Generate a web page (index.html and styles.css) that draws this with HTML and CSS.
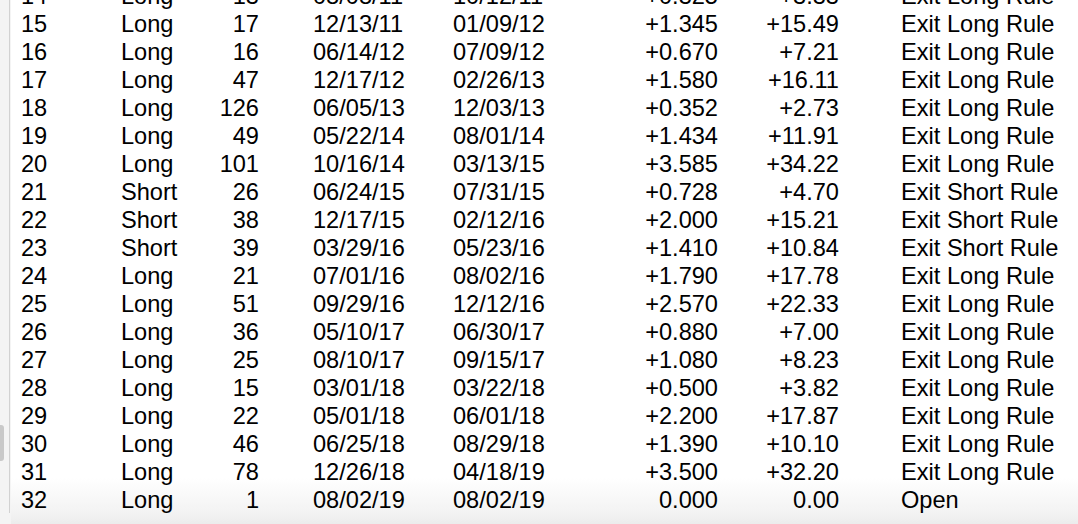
FILE: index.html
```html
<!DOCTYPE html>
<html>
<head>
<meta charset="utf-8">
<link rel="stylesheet" href="styles.css">
</head>
<body>
<div class="page">
  <div class="side">
    <div class="side-line"><div class="tab"></div></div>
  </div>
  <div class="main">
    <div class="rows">
      <div class="row"><span class="c1">14</span><span class="c2">Long</span><span class="c3">13</span><span class="c4">08/08/11</span><span class="c5">10/12/11</span><span class="c6">+0.325</span><span class="c7">+3.33</span><span class="c8">Exit Long Rule</span></div>
      <div class="row"><span class="c1">15</span><span class="c2">Long</span><span class="c3">17</span><span class="c4">12/13/11</span><span class="c5">01/09/12</span><span class="c6">+1.345</span><span class="c7">+15.49</span><span class="c8">Exit Long Rule</span></div>
      <div class="row"><span class="c1">16</span><span class="c2">Long</span><span class="c3">16</span><span class="c4">06/14/12</span><span class="c5">07/09/12</span><span class="c6">+0.670</span><span class="c7">+7.21</span><span class="c8">Exit Long Rule</span></div>
      <div class="row"><span class="c1">17</span><span class="c2">Long</span><span class="c3">47</span><span class="c4">12/17/12</span><span class="c5">02/26/13</span><span class="c6">+1.580</span><span class="c7">+16.11</span><span class="c8">Exit Long Rule</span></div>
      <div class="row"><span class="c1">18</span><span class="c2">Long</span><span class="c3">126</span><span class="c4">06/05/13</span><span class="c5">12/03/13</span><span class="c6">+0.352</span><span class="c7">+2.73</span><span class="c8">Exit Long Rule</span></div>
      <div class="row"><span class="c1">19</span><span class="c2">Long</span><span class="c3">49</span><span class="c4">05/22/14</span><span class="c5">08/01/14</span><span class="c6">+1.434</span><span class="c7">+11.91</span><span class="c8">Exit Long Rule</span></div>
      <div class="row"><span class="c1">20</span><span class="c2">Long</span><span class="c3">101</span><span class="c4">10/16/14</span><span class="c5">03/13/15</span><span class="c6">+3.585</span><span class="c7">+34.22</span><span class="c8">Exit Long Rule</span></div>
      <div class="row"><span class="c1">21</span><span class="c2">Short</span><span class="c3">26</span><span class="c4">06/24/15</span><span class="c5">07/31/15</span><span class="c6">+0.728</span><span class="c7">+4.70</span><span class="c8">Exit Short Rule</span></div>
      <div class="row"><span class="c1">22</span><span class="c2">Short</span><span class="c3">38</span><span class="c4">12/17/15</span><span class="c5">02/12/16</span><span class="c6">+2.000</span><span class="c7">+15.21</span><span class="c8">Exit Short Rule</span></div>
      <div class="row"><span class="c1">23</span><span class="c2">Short</span><span class="c3">39</span><span class="c4">03/29/16</span><span class="c5">05/23/16</span><span class="c6">+1.410</span><span class="c7">+10.84</span><span class="c8">Exit Short Rule</span></div>
      <div class="row"><span class="c1">24</span><span class="c2">Long</span><span class="c3">21</span><span class="c4">07/01/16</span><span class="c5">08/02/16</span><span class="c6">+1.790</span><span class="c7">+17.78</span><span class="c8">Exit Long Rule</span></div>
      <div class="row"><span class="c1">25</span><span class="c2">Long</span><span class="c3">51</span><span class="c4">09/29/16</span><span class="c5">12/12/16</span><span class="c6">+2.570</span><span class="c7">+22.33</span><span class="c8">Exit Long Rule</span></div>
      <div class="row"><span class="c1">26</span><span class="c2">Long</span><span class="c3">36</span><span class="c4">05/10/17</span><span class="c5">06/30/17</span><span class="c6">+0.880</span><span class="c7">+7.00</span><span class="c8">Exit Long Rule</span></div>
      <div class="row"><span class="c1">27</span><span class="c2">Long</span><span class="c3">25</span><span class="c4">08/10/17</span><span class="c5">09/15/17</span><span class="c6">+1.080</span><span class="c7">+8.23</span><span class="c8">Exit Long Rule</span></div>
      <div class="row"><span class="c1">28</span><span class="c2">Long</span><span class="c3">15</span><span class="c4">03/01/18</span><span class="c5">03/22/18</span><span class="c6">+0.500</span><span class="c7">+3.82</span><span class="c8">Exit Long Rule</span></div>
      <div class="row"><span class="c1">29</span><span class="c2">Long</span><span class="c3">22</span><span class="c4">05/01/18</span><span class="c5">06/01/18</span><span class="c6">+2.200</span><span class="c7">+17.87</span><span class="c8">Exit Long Rule</span></div>
      <div class="row"><span class="c1">30</span><span class="c2">Long</span><span class="c3">46</span><span class="c4">06/25/18</span><span class="c5">08/29/18</span><span class="c6">+1.390</span><span class="c7">+10.10</span><span class="c8">Exit Long Rule</span></div>
      <div class="row"><span class="c1">31</span><span class="c2">Long</span><span class="c3">78</span><span class="c4">12/26/18</span><span class="c5">04/18/19</span><span class="c6">+3.500</span><span class="c7">+32.20</span><span class="c8">Exit Long Rule</span></div>
      <div class="row"><span class="c1">32</span><span class="c2">Long</span><span class="c3">1</span><span class="c4">08/02/19</span><span class="c5">08/02/19</span><span class="c6">0.000</span><span class="c7">0.00</span><span class="c8">Open</span></div>
    </div>
  </div>
</div>
</body>
</html>
```
FILE: styles.css
```css
html, body {
  margin: 0;
  padding: 0;
  background: #ffffff;
}
.page {
  display: flex;
  width: 1078px;
  height: 524px;
  overflow: hidden;
  font-family: "Liberation Sans", Arial, Helvetica, sans-serif;
  font-size: 23.6px;
  color: #000;
}
.side {
  width: 11px;
  flex: none;
  background: #f4f4f4;
}
.side-line {
  width: 10px;
  height: 513px;
  border-right: 1px solid #d2d2d2;
  padding-top: 425px;
  box-sizing: border-box;
}
.tab {
  width: 4px;
  height: 36px;
  background: #c9c9c9;
  border-radius: 0 3px 3px 0;
}
.main {
  flex: 1;
  background: linear-gradient(to bottom, #ffffff 0, #ffffff 478px, #f3f3f3 512px, #ececec 524px);
}
.rows {
  margin-top: -18px;
  padding-left: 10px;
}
.row {
  display: flex;
  height: 28px;
  line-height: 28px;
  white-space: nowrap;
}
.c1 { width: 100px; }
.c2 { width: 79px; }
.c3 { width: 59px; text-align: right; }
.c4 { width: 194px; padding-left: 54px; box-sizing: border-box; }
.c5 { width: 147px; }
.c6 { width: 118px; text-align: right; }
.c7 { width: 121px; text-align: right; }
.c8 { padding-left: 62px; }
```
